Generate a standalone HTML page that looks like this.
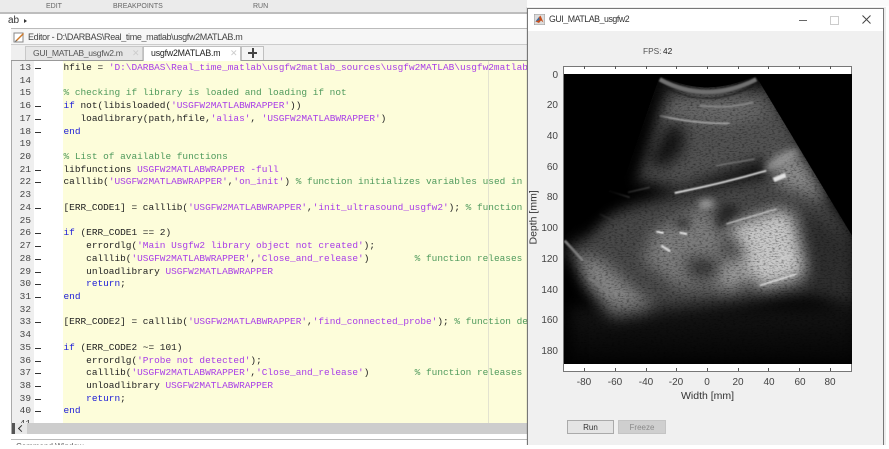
<!DOCTYPE html>
<html><head><meta charset="utf-8">
<style>
html,body{margin:0;padding:0;background:#fff}
#p{position:relative;width:889px;height:449px;overflow:hidden;background:#fff;font-family:"Liberation Sans",sans-serif}
.a{position:absolute}
.t{position:absolute;white-space:pre}
#code{position:absolute;left:0;top:1px;width:527px;height:422px;overflow:hidden;filter:blur(.35px)}
.l{position:absolute;left:63.5px;white-space:pre;font:9.45px/12px "Liberation Mono",monospace;color:#222}
.n{position:absolute;left:14px;width:17px;text-align:right;font:9.45px/12px "Liberation Mono",monospace;color:#444}
.d{position:absolute;left:35px;width:6px;height:1px;background:#333}
.k{color:#2020d8}.s{color:#a83ce8}.c{color:#4f9a5c}
.tk{position:absolute;font-size:10px;line-height:12px;color:#444;filter:blur(.25px)}
.x{width:30px;text-align:center;top:377px}
.y{width:30px;text-align:right;left:528px}
</style></head><body><div id="p">

<!-- top toolstrip -->
<div class="a" style="left:0;top:0;width:889px;height:6px;background:#fbfbfb"></div>
<div class="a" style="left:0;top:0;width:527px;height:12px;background:#ebebeb"></div>
<div class="a" style="left:0;top:12px;width:527px;height:2px;background:#bdbdbd"></div>
<div class="t" style="left:46px;top:3px;font-size:7px;color:#666;filter:blur(.3px)">EDIT</div>
<div class="t" style="left:113px;top:3px;font-size:7px;color:#666;filter:blur(.3px)">BREAKPOINTS</div>
<div class="t" style="left:253px;top:3px;font-size:7px;color:#666;filter:blur(.3px)">RUN</div>
<div class="a" style="left:0;top:14px;width:527px;height:14px;background:#fff"></div>
<div class="t" style="left:8px;top:15px;font-size:10px;color:#333">ab</div>
<div class="a" style="left:24px;top:19px;border-left:3px solid #333;border-top:2px solid transparent;border-bottom:2px solid transparent"></div>

<!-- editor -->
<div class="a" style="left:11px;top:28px;width:516px;height:1px;background:#bbb"></div>
<div class="a" style="left:11px;top:29px;width:516px;height:15px;background:#f6f6f6;border-bottom:1px solid #ccc"></div>
<svg class="a" style="left:13px;top:31px" width="12" height="12" viewBox="0 0 12 12"><rect x="1" y="2" width="9" height="9" fill="#fff" stroke="#888"/><path d="M3 9 L10 2 L11 3 L4 10 Z" fill="#d07a2a"/><path d="M3 9l1 1-2 .6z" fill="#333"/></svg>
<div class="t" style="left:28px;top:30px;font-size:9px;letter-spacing:-.34px;line-height:14px;color:#444;filter:blur(.25px)">Editor - D:\DARBAS\Real_time_matlab\usgfw2MATLAB.m</div>
<div class="a" style="left:11px;top:45px;width:516px;height:15px;background:#efefef;border-bottom:1px solid #999"></div>
<div class="a" style="left:25px;top:46px;width:118px;height:14px;background:#e6e6e6;border:1px solid #c8c8c8;border-bottom:0;box-sizing:border-box"></div>
<div class="t" style="left:33px;top:46px;font-size:8.6px;letter-spacing:-.3px;line-height:14px;color:#555;filter:blur(.25px)">GUI_MATLAB_usgfw2.m</div>
<div class="t" style="left:132px;top:46px;font-size:9px;line-height:14px;color:#ccc">✕</div>
<div class="a" style="left:143px;top:46px;width:98px;height:15px;background:#fff;border:1px solid #c0c0c0;border-bottom:0;box-sizing:border-box"></div>
<div class="t" style="left:151px;top:46px;font-size:8.8px;letter-spacing:-.2px;line-height:14px;color:#222;filter:blur(.25px)">usgfw2MATLAB.m</div>
<div class="t" style="left:230px;top:46px;font-size:9px;line-height:14px;color:#ccc">✕</div>
<div class="a" style="left:241px;top:46px;width:23px;height:14px;background:#f4f4f4;border:1px solid #c0c0c0;border-bottom:0;box-sizing:border-box"></div>
<div class="a" style="left:248px;top:52px;width:9px;height:2px;background:#444"></div>
<div class="a" style="left:252px;top:48px;width:2px;height:10px;background:#444"></div>

<div class="a" style="left:11px;top:61px;width:1px;height:373px;background:#aaa"></div>
<div class="a" style="left:12px;top:61px;width:515px;height:362px;background:#fff"></div>
<div class="a" style="left:12px;top:61px;width:22px;height:362px;background:#efefef"></div>
<div class="a" style="left:63px;top:61px;width:464px;height:362px;background:#fdfdda"></div>
<div class="a" style="left:488px;top:61px;width:1px;height:362px;background:#e3e3d0"></div>

<div id="code">
<div class="n" style="top:61px">13</div><div class="d" style="top:67px"></div>
<div class="l" style="top:61px">hfile = <span class="s">'D:\DARBAS\Real_time_matlab\usgfw2matlab_sources\usgfw2MATLAB\usgfw2matlab</span></div>
<div class="n" style="top:74px">14</div>
<div class="n" style="top:86px">15</div>
<div class="l c" style="top:86px">% checking if library is loaded and loading if not</div>
<div class="n" style="top:99px">16</div><div class="d" style="top:105px"></div>
<div class="l" style="top:99px"><span class="k">if</span> not(libisloaded(<span class="s">'USGFW2MATLABWRAPPER'</span>))</div>
<div class="n" style="top:112px">17</div><div class="d" style="top:118px"></div>
<div class="l" style="top:112px">   loadlibrary(path,hfile,<span class="s">'alias'</span>, <span class="s">'USGFW2MATLABWRAPPER'</span>)</div>
<div class="n" style="top:125px">18</div><div class="d" style="top:131px"></div>
<div class="l k" style="top:125px">end</div>
<div class="n" style="top:137px">19</div>
<div class="n" style="top:150px">20</div>
<div class="l c" style="top:150px">% List of available functions</div>
<div class="n" style="top:163px">21</div><div class="d" style="top:169px"></div>
<div class="l" style="top:163px">libfunctions <span class="s">USGFW2MATLABWRAPPER -full</span></div>
<div class="n" style="top:175px">22</div><div class="d" style="top:181px"></div>
<div class="l" style="top:175px">calllib(<span class="s">'USGFW2MATLABWRAPPER'</span>,<span class="s">'on_init'</span>) <span class="c">% function initializes variables used in</span></div>
<div class="n" style="top:188px">23</div>
<div class="n" style="top:201px">24</div><div class="d" style="top:207px"></div>
<div class="l" style="top:201px">[ERR_CODE1] = calllib(<span class="s">'USGFW2MATLABWRAPPER'</span>,<span class="s">'init_ultrasound_usgfw2'</span>); <span class="c">% function</span></div>
<div class="n" style="top:214px">25</div>
<div class="n" style="top:226px">26</div><div class="d" style="top:232px"></div>
<div class="l" style="top:226px"><span class="k">if</span> (ERR_CODE1 == 2)</div>
<div class="n" style="top:239px">27</div><div class="d" style="top:245px"></div>
<div class="l" style="top:239px">    errordlg(<span class="s">'Main Usgfw2 library object not created'</span>);</div>
<div class="n" style="top:252px">28</div><div class="d" style="top:258px"></div>
<div class="l" style="top:252px">    calllib(<span class="s">'USGFW2MATLABWRAPPER'</span>,<span class="s">'Close_and_release'</span>)        <span class="c">% function releases</span></div>
<div class="n" style="top:265px">29</div><div class="d" style="top:271px"></div>
<div class="l" style="top:265px">    unloadlibrary <span class="s">USGFW2MATLABWRAPPER</span></div>
<div class="n" style="top:277px">30</div><div class="d" style="top:283px"></div>
<div class="l k" style="top:277px">    return<span style="color:#222">;</span></div>
<div class="n" style="top:290px">31</div><div class="d" style="top:296px"></div>
<div class="l k" style="top:290px">end</div>
<div class="n" style="top:303px">32</div>
<div class="n" style="top:315px">33</div><div class="d" style="top:321px"></div>
<div class="l" style="top:315px">[ERR_CODE2] = calllib(<span class="s">'USGFW2MATLABWRAPPER'</span>,<span class="s">'find_connected_probe'</span>); <span class="c">% function de</span></div>
<div class="n" style="top:328px">34</div>
<div class="n" style="top:341px">35</div><div class="d" style="top:347px"></div>
<div class="l" style="top:341px"><span class="k">if</span> (ERR_CODE2 ~= 101)</div>
<div class="n" style="top:354px">36</div><div class="d" style="top:360px"></div>
<div class="l" style="top:354px">    errordlg(<span class="s">'Probe not detected'</span>);</div>
<div class="n" style="top:366px">37</div><div class="d" style="top:372px"></div>
<div class="l" style="top:366px">    calllib(<span class="s">'USGFW2MATLABWRAPPER'</span>,<span class="s">'Close_and_release'</span>)        <span class="c">% function releases</span></div>
<div class="n" style="top:379px">38</div><div class="d" style="top:385px"></div>
<div class="l" style="top:379px">    unloadlibrary <span class="s">USGFW2MATLABWRAPPER</span></div>
<div class="n" style="top:392px">39</div><div class="d" style="top:398px"></div>
<div class="l k" style="top:392px">    return<span style="color:#222">;</span></div>
<div class="n" style="top:404px">40</div><div class="d" style="top:410px"></div>
<div class="l k" style="top:404px">end</div>
<div class="n" style="top:417px">41</div>
</div>

<!-- scrollbar + bottom -->
<div class="a" style="left:12px;top:423px;width:515px;height:11px;background:#cdcdcd"></div>
<div class="a" style="left:12px;top:423px;width:3px;height:11px;background:#555"></div>
<div class="a" style="left:15px;top:423px;width:12px;height:11px;background:#e8e8e8"></div>
<div class="a" style="left:19px;top:426px;width:4px;height:4px;border-left:1px solid #333;border-bottom:1px solid #333;transform:rotate(45deg)"></div>
<div class="a" style="left:11px;top:439px;width:516px;height:1px;background:#bbb"></div>
<div class="a" style="left:11px;top:440px;width:200px;height:5px;overflow:hidden"><div class="t" style="left:5px;top:2px;font-size:8px;color:#555">Command Window</div></div>

<!-- figure window -->
<div class="a" style="left:526px;top:7px;width:360px;height:438px;background:rgba(0,0,0,.07)"></div>
<div class="a" style="left:527px;top:8px;width:357px;height:437px;background:#f0f0f0;border:1px solid #777;border-bottom:0;box-sizing:border-box"></div>
<div class="a" style="left:528px;top:9px;width:355px;height:22px;background:#fff"></div>
<svg class="a" style="left:534px;top:14px" width="11" height="11" viewBox="0 0 11 11"><rect width="11" height="11" fill="#ddd" stroke="#999"/><path d="M1.5 7.5 L5 3 L6.5 1.5 L9.5 8.5 L7 6.5 L5 9 Z" fill="#c8501e"/><path d="M1.5 7.5 L5 3 L5.5 6 Z" fill="#3a6ea5"/></svg>
<div class="t" style="left:549px;top:12px;font-size:8.8px;letter-spacing:-.45px;line-height:14px;color:#333;filter:blur(.2px)">GUI_MATLAB_usgfw2</div>
<div class="a" style="left:799px;top:20px;width:8px;height:1px;background:#666"></div>
<div class="a" style="left:830px;top:16px;width:7px;height:7px;border:1px solid #ccc"></div>
<svg class="a" style="left:861px;top:14px" width="11" height="11"><path d="M1.5 1.5L9.5 9.5M9.5 1.5L1.5 9.5" stroke="#444" stroke-width="1" fill="none"/></svg>

<div class="t" style="left:643px;top:45px;font-size:8.3px;line-height:12px;color:#555">FPS:</div>
<div class="t" style="left:663px;top:45px;font-size:8.3px;line-height:12px;color:#222">42</div>

<!-- axes -->
<svg class="a" style="left:563px;top:66px" width="290" height="306" viewBox="563 66 290 306">
<defs>
<filter id="sp" filterUnits="userSpaceOnUse" x="0" y="0" width="870" height="870" color-interpolation-filters="sRGB">
<feGaussianBlur in="SourceGraphic" stdDeviation="22" result="src"/>
<feTurbulence type="fractalNoise" baseFrequency="0.11 0.26" numOctaves="2" seed="7" result="n"/>
<feGaussianBlur in="n" stdDeviation="1" result="n2"/>
<feColorMatrix in="n2" type="matrix" values="0 0 0 1.1 0.42  0 0 0 1.1 0.42  0 0 0 1.1 0.42  0 0 0 0 1" result="g"/>
<feComposite in="src" in2="g" operator="arithmetic" k1="1" k2="0" k3="0" k4="0"/>
</filter>
<filter id="b3" filterUnits="userSpaceOnUse" x="-100" y="-100" width="1100" height="1100" color-interpolation-filters="sRGB"><feGaussianBlur stdDeviation="12"/></filter>
<filter id="b6" filterUnits="userSpaceOnUse" x="-100" y="-100" width="1100" height="1100" color-interpolation-filters="sRGB"><feGaussianBlur stdDeviation="24"/></filter>
<filter id="b1" filterUnits="userSpaceOnUse" x="-100" y="-100" width="1100" height="1100" color-interpolation-filters="sRGB"><feGaussianBlur stdDeviation="2.4"/></filter>
<clipPath id="img"><rect x="3" y="0" width="864" height="870"/></clipPath>
<clipPath id="sec"><path d="M290 8 L580 8 L870 490 L870 870 L0 870 L0 490 L190 300Z"/></clipPath>
<linearGradient id="fd" x1="0" y1="0" x2="0" y2="1"><stop offset="0" stop-color="#000" stop-opacity="0"/><stop offset="1" stop-color="#000" stop-opacity=".85"/></linearGradient>
</defs>
<rect x="563.5" y="66.5" width="288" height="305" fill="#fff" stroke="#777"/>
<rect x="564" y="74" width="288" height="290" fill="#000"/>
<g transform="translate(563 74) scale(.33333)">
<g clip-path="url(#img)">
<g clip-path="url(#sec)">
<g filter="url(#sp)">
<rect x="0" y="0" width="870" height="870" fill="#000"/>
<path d="M250 40 L620 40 L720 210 L610 255 L350 345 L200 310 L240 180Z" fill="#525252"/>
<path d="M300 370 L620 300 L780 360 L880 490 L880 660 L700 660 L500 690 L300 710 L100 650 L0 540 L130 420Z" fill="#484848"/>
<path d="M720 400 L880 500 L880 700 L730 660Z" fill="#2e2e2e"/>
<path d="M0 700 L300 710 L880 700 L880 880 L0 880Z" fill="#191919"/>
<path d="M320 150 L362 150 L362 230 L300 285 L255 265Z" fill="#111"/>
<path d="M610 255 L710 225 L800 380 L650 335Z" fill="#8a8a8a"/>
<path d="M300 90 L570 70 L620 120 L500 150 L280 130Z" fill="#6a6a6a"/>
<path d="M270 470 L420 395 L480 470 L470 640 L350 640 L240 560Z" fill="#7c7c7c"/>
<path d="M30 540 L120 560 L280 710 L150 735 L60 620Z" fill="#858585"/>
<path d="M470 560 L570 550 L560 620 L500 650 L470 640Z" fill="#9a9a9a"/>
<path d="M490 460 L650 405 L690 425 L730 590 L700 615 L590 640 L560 590 L540 520Z" fill="#c8c8c8"/>
<path d="M370 550 L470 560 L460 610 L380 610Z" fill="#2e2e2e"/>
</g>
<!-- dark pockets -->
<path d="M460 470 L535 410 L490 385 L465 420Z" fill="#1e1e1e" filter="url(#b3)" opacity=".8"/>
<path d="M335 440 L375 430 L385 460 L345 465Z" fill="#222" filter="url(#b3)" opacity=".7"/>
<!-- bright reflectors -->
<path d="M335 357 Q480 328 610 290" fill="none" stroke="#f0f0f0" stroke-width="5" filter="url(#b1)"/>
<path d="M610 285 Q660 255 700 232" fill="none" stroke="#aaa" stroke-width="18" filter="url(#b3)"/>
<path d="M632 318 L668 303" stroke="#e2e2e2" stroke-width="14" filter="url(#b1)"/>
<path d="M290 125 Q400 150 500 148" fill="none" stroke="#aaa" stroke-width="5" filter="url(#b1)"/>
<path d="M410 95 Q500 105 570 85" fill="none" stroke="#888" stroke-width="6" filter="url(#b1)"/>
<path d="M460 275 L575 255" stroke="#7a7a7a" stroke-width="4" filter="url(#b1)"/>
<path d="M490 450 L640 405" stroke="#ccc" stroke-width="4" filter="url(#b1)"/>
<path d="M590 635 L700 600" stroke="#eee" stroke-width="4" filter="url(#b1)"/>
<path d="M650 555 L685 545" stroke="#ddd" stroke-width="3" filter="url(#b1)"/>
<path d="M280 473 L302 477M350 476 L372 480" stroke="#fff" stroke-width="5" filter="url(#b1)"/>
<path d="M295 515 L322 532" stroke="#ddd" stroke-width="7" filter="url(#b1)"/>
<path d="M410 392 L450 388" stroke="#b5b5b5" stroke-width="22" filter="url(#b3)"/>
<path d="M5 500 L60 560" stroke="#8c8c8c" stroke-width="8" filter="url(#b1)"/>
<path d="M75 610 L150 665" stroke="#7c7c7c" stroke-width="6" filter="url(#b1)"/>
<path d="M135 350 L200 370M110 420 L170 450M195 355 L260 340" stroke="#444" stroke-width="4" filter="url(#b1)"/>
<rect x="0" y="660" width="870" height="210" fill="url(#fd)"/>
<!-- soft left edge -->
<path d="M285 20 L190 300 L30 470" fill="none" stroke="#000" stroke-width="70" filter="url(#b6)"/>
<path d="M0 540 L0 870" fill="none" stroke="#000" stroke-width="40" filter="url(#b6)"/>
</g>
<!-- probe arc -->
<path d="M290 16 Q430 92 580 16" fill="none" stroke="#707070" stroke-width="13" filter="url(#b1)"/>
<path d="M300 36 Q430 110 570 36" fill="none" stroke="#181818" stroke-width="3" filter="url(#b1)"/>
<path d="M297 6 Q430 74 573 6 L573 0 L297 0Z" fill="#000"/>
</g>
</g>
<!-- ticks -->
<g stroke="#555" stroke-width="1">
<path d="M584.5 66v3M615.5 66v3M646.5 66v3M676.5 66v3M707.5 66v3M738.5 66v3M768.5 66v3M799.5 66v3M830.5 66v3"/>
<path d="M584.5 371v-3M615.5 371v-3M646.5 371v-3M676.5 371v-3M707.5 371v-3M738.5 371v-3M768.5 371v-3M799.5 371v-3M830.5 371v-3"/>
</g>
</svg>

<div class="tk x" style="left:569px">-80</div><div class="tk x" style="left:600px">-60</div><div class="tk x" style="left:631px">-40</div><div class="tk x" style="left:661px">-20</div><div class="tk x" style="left:692px">0</div><div class="tk x" style="left:723px">20</div><div class="tk x" style="left:754px">40</div><div class="tk x" style="left:785px">60</div><div class="tk x" style="left:815px">80</div>
<div class="tk y" style="top:70px">0</div><div class="tk y" style="top:100px">20</div><div class="tk y" style="top:131px">40</div><div class="tk y" style="top:162px">60</div><div class="tk y" style="top:192px">80</div><div class="tk y" style="top:223px">100</div><div class="tk y" style="top:254px">120</div><div class="tk y" style="top:285px">140</div><div class="tk y" style="top:315px">160</div><div class="tk y" style="top:346px">180</div>
<div class="t" style="left:681px;top:390px;font-size:10.5px;line-height:13px;color:#333;filter:blur(.2px)">Width [mm]</div>
<div class="t" style="left:509px;top:213px;width:50px;text-align:center;font-size:10.5px;line-height:13px;color:#333;transform:rotate(-90deg)">Depth [mm]</div>

<div class="a" style="left:567px;top:420px;width:47px;height:14px;background:#e4e4e4;border:1px solid #aaa;box-sizing:border-box;text-align:center;font-size:8px;line-height:13px;color:#333">Run</div>
<div class="a" style="left:618px;top:420px;width:48px;height:14px;background:#cfcfcf;border:1px solid #c4c4c4;box-sizing:border-box;text-align:center;font-size:8px;line-height:13px;color:#8a8a8a">Freeze</div>
</div></body></html>
